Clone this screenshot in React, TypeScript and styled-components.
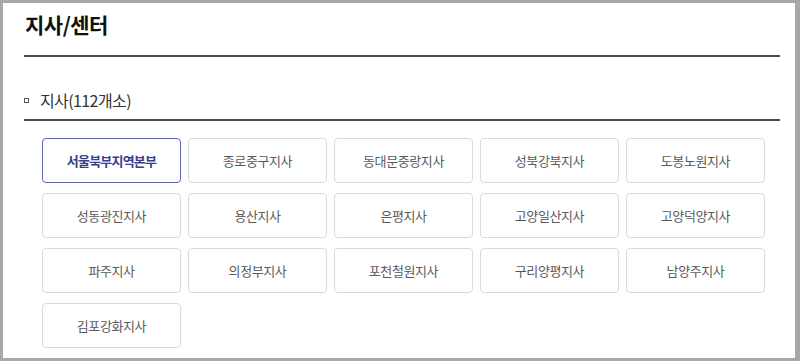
import React from 'react';
import styled, { createGlobalStyle } from 'styled-components';

const GlobalStyle = createGlobalStyle`
    html, body {
        margin: 0;
        padding: 0;
        background: #ffffff;
    }

    body {
        font-family: "Noto Sans CJK KR", "Noto Sans", sans-serif;
    }
`;

const Frame = styled.div`
    box-sizing: border-box;
    width: 800px;
    height: 361px;
    border-style: solid;
    border-color: #a7a7a7;
    border-width: 3px 5px 3px 3px;
    background: #ffffff;
    padding: 0 15px 0 21px;
    overflow: hidden;
`;

const Title = styled.h2`
    margin: 0;
    padding: 5px 0 15px 1px;
    line-height: 32px;
    font-size: 21px;
    font-weight: 700;
    letter-spacing: -0.5px;
    color: #111111;
    border-bottom: 2px solid #4d4d4d;
`;

const SubHead = styled.h3`
    display: flex;
    align-items: center;
    gap: 11px;
    margin: 0;
    padding: 32px 0 8px 0;
    line-height: 22px;
    font-size: 16px;
    font-weight: 400;
    letter-spacing: -0.6px;
    color: #333333;
    border-bottom: 2px solid #4d4d4d;
`;

const Bullet = styled.span`
    display: inline-block;
    box-sizing: border-box;
    flex: none;
    width: 5px;
    height: 5px;
    margin-top: 1px;
    border: 1px solid #555555;
`;

const BranchGrid = styled.div`
    display: grid;
    grid-template-columns: repeat(5, 139px);
    grid-auto-rows: 45px;
    column-gap: 7px;
    row-gap: 10px;
    margin-top: 17px;
    padding-left: 18px;
`;

const BranchButton = styled.button<{ $active?: boolean }>`
    box-sizing: border-box;
    display: flex;
    align-items: center;
    justify-content: center;
    margin: 0;
    padding: 0;
    background: #ffffff;
    border: 1px solid ${(p) => (p.$active ? '#5d67a4' : '#dadada')};
    border-radius: 4px;
    font-family: "Noto Sans CJK KR", "Noto Sans", sans-serif;
    font-size: 13px;
    font-weight: ${(p) => (p.$active ? 700 : 400)};
    letter-spacing: ${(p) => (p.$active ? '-0.8px' : '-0.4px')};
    color: ${(p) => (p.$active ? '#33418c' : '#5a5a5a')};
    cursor: pointer;
`;

const branches = [
    '서울북부지역본부',
    '종로중구지사',
    '동대문중랑지사',
    '성북강북지사',
    '도봉노원지사',
    '성동광진지사',
    '용산지사',
    '은평지사',
    '고양일산지사',
    '고양덕양지사',
    '파주지사',
    '의정부지사',
    '포천철원지사',
    '구리양평지사',
    '남양주지사',
    '김포강화지사',
];

const App = () => (
    <>
        <GlobalStyle />
        <Frame>
            <Title>지사/센터</Title>
            <SubHead>
                <Bullet />
                지사(112개소)
            </SubHead>
            <BranchGrid>
                {branches.map((name, i) => (
                    <BranchButton key={name} type="button" $active={i === 0}>
                        {name}
                    </BranchButton>
                ))}
            </BranchGrid>
        </Frame>
    </>
);

export default App;
